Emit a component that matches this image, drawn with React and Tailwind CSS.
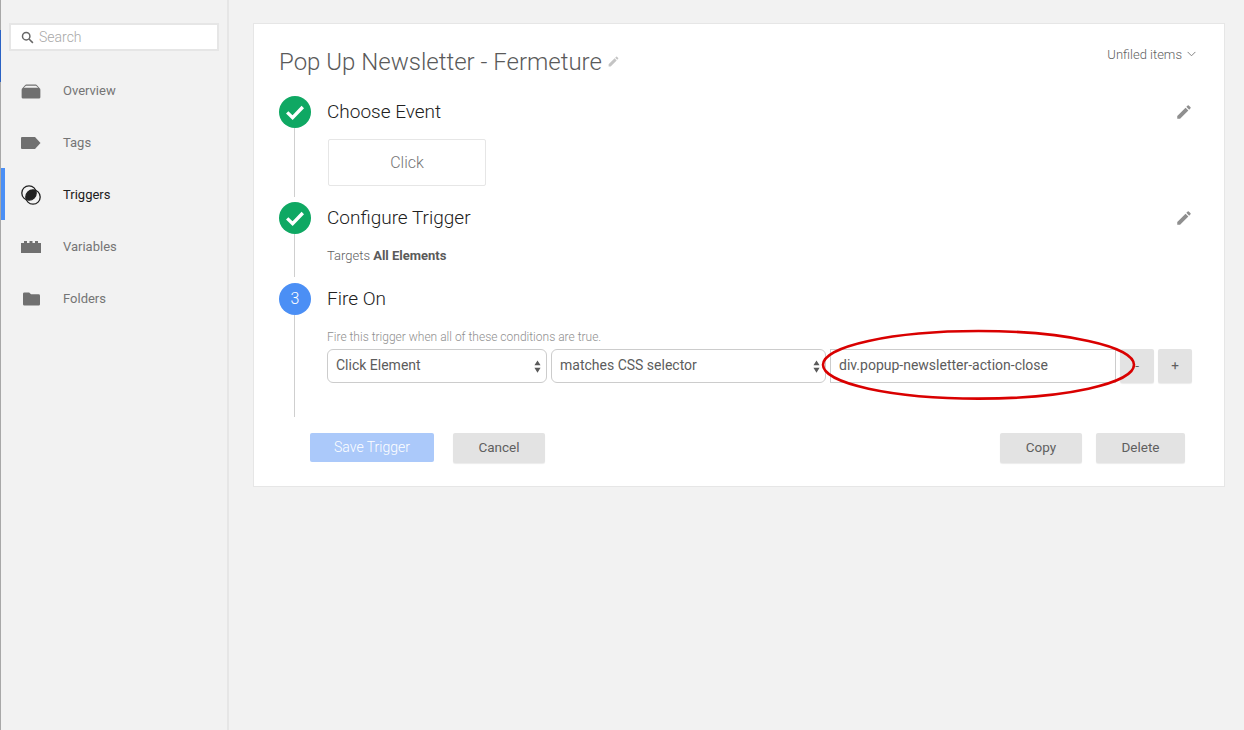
const Pencil = ({ className }) => (
  <svg viewBox="0 0 24 24" className={className} fill="currentColor">
    <path d="M3 17.25V21h3.75L17.81 9.94l-3.75-3.75L3 17.25zM20.71 7.04a1 1 0 0 0 0-1.41l-2.34-2.34a1 1 0 0 0-1.41 0l-1.83 1.83 3.75 3.75 1.83-1.83z" />
  </svg>
);

const Check = () => (
  <svg viewBox="0 0 32 32" className="w-8 h-8" fill="none" stroke="white" strokeWidth="3.4">
    <path d="M8.2 16.4 L13.6 21.6 L23.8 11" />
  </svg>
);

const Updown = () => (
  <svg viewBox="0 0 8 14" className="w-[7px] h-[13px]" fill="#5a5a5a">
    <path d="M4 0 L7.5 5.6 H0.5 Z M4 14 L0.5 8.4 H7.5 Z" />
  </svg>
);

const icons = {
  Overview: (
    <svg viewBox="0 0 20 16" className="w-5 h-[15px]" fill="#707070">
      <path d="M0 6 Q0 5 1 4.2 L3.6 1.2 Q4.2 .5 5 .5 H15 Q15.8 .5 16.4 1.2 L19 4.2 Q20 5 20 6 V14 Q20 15.5 18.5 15.5 H1.5 Q0 15.5 0 14 Z M2.2 4 H17.8 L15.4 1.8 H4.6 Z" fillRule="evenodd" />
    </svg>
  ),
  Tags: (
    <svg viewBox="0 0 20 12" className="w-5 h-3" fill="#707070">
      <path d="M1 0 H14 L19.5 6 L14 12 H1 Q0 12 0 11 V1 Q0 0 1 0 Z" />
    </svg>
  ),
  Triggers: (
    <svg viewBox="0 0 20 20" className="w-5 h-5" fill="none">
      <defs>
        <clipPath id="trigger-lens">
          <circle cx="8" cy="8" r="7.2" />
        </clipPath>
      </defs>
      <circle cx="8" cy="8" r="7.2" stroke="#222" strokeWidth="1.3" />
      <circle cx="12" cy="12" r="7.2" stroke="#222" strokeWidth="1.3" />
      <circle cx="12" cy="12" r="7.2" fill="#222" clipPath="url(#trigger-lens)" />
    </svg>
  ),
  Variables: (
    <svg viewBox="0 0 20 12" className="w-5 h-3" fill="#707070">
      <path d="M0 2 H3 V0 H6 V2 H8.5 V0 H11.5 V2 H14 V0 H17 V2 H20 V12 H0 Z" />
    </svg>
  ),
  Folders: (
    <svg viewBox="0 0 18 14" className="w-[17px] h-[14px]" fill="#707070">
      <path d="M1.5 0 H6.5 L8.5 2 H16.5 Q18 2 18 3.5 V12.5 Q18 14 16.5 14 H1.5 Q0 14 0 12.5 V1.5 Q0 0 1.5 0 Z" />
    </svg>
  ),
};

const NavItem = ({ label, active }) => (
  <div className="relative h-[52px] flex items-center pl-5 pt-[2px]">
    {active && <div className="absolute left-0 top-0 w-1 h-full bg-[#4b8ff5]" />}
    <div className="w-5 flex justify-center">{icons[label]}</div>
    <span className={`ml-[22px] text-[13px] ${active ? "text-[#212121]" : "text-[#757575]"}`}>{label}</span>
  </div>
);

const Select = ({ label, className }) => (
  <div className={`h-[34px] bg-white border border-[#cccccc] rounded-[6px] flex items-center justify-between pl-2 pr-[5px] text-[14px] text-[#5c5c5c] ${className}`}>
    <span className="-mt-[2px]">{label}</span>
    <Updown />
  </div>
);

const Button = ({ children, className }) => (
  <div className={`h-[30px] flex items-center justify-center rounded-[2px] bg-[#e3e3e3] shadow-[0_1px_1px_rgba(0,0,0,0.08)] text-[13.5px] text-[#5f5f5f] pb-px ${className}`}>
    {children}
  </div>
);

const Rail = ({ children, lineClass }) => (
  <div className="w-8 shrink-0 flex flex-col items-center">
    {children}
    <div className={`w-px flex-1 bg-[#cfcfcf] mr-px ${lineClass}`} />
  </div>
);

const Done = () => (
  <div className="w-8 h-8 rounded-full bg-[#0fa863] shrink-0">
    <Check />
  </div>
);

export default function App() {
  return (
    <div className="relative flex w-[1244px] h-[730px] overflow-hidden bg-[#f2f2f2] font-['Roboto',sans-serif]">
      <aside className="w-[229px] h-full shrink-0 border-l border-l-[#a8a8a8] border-r-2 border-r-[#e6e6e6] relative">
        <div className="absolute -left-px top-[30px] w-px h-[52px] bg-[#2a62c4]" />
        <div className="ml-2 mt-[23px] h-[28px] w-[210px] bg-white border-2 border-[#e6e6e6] flex items-center pl-[10px]">
          <svg viewBox="0 0 14 14" className="w-[13px] h-[13px]" fill="none" stroke="#666" strokeWidth="1.6">
            <circle cx="5.6" cy="5.6" r="4" />
            <path d="M8.6 8.6 L12.8 12.8" />
          </svg>
          <span className="ml-[5px] text-[14px] font-light text-[#a8a8a8]">Search</span>
        </div>
        <nav className="mt-[13px]">
          <NavItem label="Overview" />
          <NavItem label="Tags" />
          <NavItem label="Triggers" active />
          <NavItem label="Variables" />
          <NavItem label="Folders" />
        </nav>
      </aside>

      <main className="flex-1 pl-6 pr-[19px] pt-[23px]">
        <section className="h-[464px] bg-white border border-[#e6e6e6] pl-[25px] pr-[32px] pt-[22px]">
          <header className="flex justify-between h-[50px]">
            <div className="flex items-center h-[32px]">
              <h1 className="text-[24px] font-light text-[#5a5a5a] leading-8">Pop Up Newsletter - Fermeture</h1>
              <Pencil className="w-[13px] h-[13px] ml-[5px] -mt-px text-[#c4c4c4]" />
            </div>
            <div className="flex items-center h-[18px] text-[13px] text-[#616161] -mr-1">
              <span className="font-light">Unfiled items</span>
              <svg viewBox="0 0 10 6" className="w-[9px] h-[6px] ml-[5px] -mt-[2px]" fill="none" stroke="#757575" strokeWidth="1">
                <path d="M0.7 0.7 L5 5 L9.3 0.7" />
              </svg>
            </div>
          </header>

          <div className="flex h-[106px]">
            <Rail lineClass="mb-[5px]"><Done /></Rail>
            <div className="ml-4 flex-1">
              <div className="flex items-center justify-between h-8">
                <span className="text-[19px] font-light text-[#212121]">Choose Event</span>
                <Pencil className="w-[18px] h-[18px] text-[#8f8f8f] -mr-px" />
              </div>
              <div className="mt-[11px] ml-px w-[158px] h-[47px] border border-[#e6e6e6] rounded-[2px] flex items-center justify-center text-[16px] font-light text-[#757575]">
                Click
              </div>
            </div>
          </div>

          <div className="flex h-[81px]">
            <Rail lineClass="mb-[6px]"><Done /></Rail>
            <div className="ml-4 flex-1">
              <div className="flex items-center justify-between h-8">
                <span className="text-[19px] font-light text-[#212121]">Configure Trigger</span>
                <Pencil className="w-[18px] h-[18px] text-[#8f8f8f] -mr-px" />
              </div>
              <p className="mt-[14px] text-[13px] leading-4 font-light text-[#616161]">
                Targets <span className="font-bold text-[#5a5a5a]">All Elements</span>
              </p>
            </div>
          </div>

          <div className="flex h-[134px]">
            <Rail>
              <div className="w-8 h-8 rounded-full bg-[#4b8ff5] shrink-0 flex items-center justify-center text-[16px] font-light text-white">3</div>
            </Rail>
            <div className="ml-4 flex-1">
              <div className="flex items-center h-8">
                <span className="text-[19px] font-light text-[#212121]">Fire On</span>
              </div>
              <p className="mt-[14px] text-[12px] leading-4 font-light text-[#8f8f8f]">Fire this trigger when all of these conditions are true.</p>
              <div className="mt-1 flex gap-1">
                <Select label="Click Element" className="w-[220px]" />
                <Select label="matches CSS selector" className="w-[275px]" />
                <div className="w-[286px] h-[34px] bg-white border border-[#cccccc] flex items-center pl-2 pb-[2px] text-[14px] text-[#5c5c5c]">
                  div.popup-newsletter-action-close
                </div>
                <Button className="!h-[34px] w-[34px]">-</Button>
                <Button className="!h-[34px] w-[34px]">+</Button>
              </div>
            </div>
          </div>

          <footer className="mt-4 flex pl-[31px] pr-[7px] items-start">
            <div className="h-[29px] w-[124px] rounded-[2px] bg-[#abc9fa] flex items-center justify-center text-[14px] font-light text-white">Save Trigger</div>
            <Button className="ml-[19px] w-[92px]">Cancel</Button>
            <Button className="ml-auto w-[82px]">Copy</Button>
            <Button className="ml-[14px] w-[89px]">Delete</Button>
          </footer>
        </section>
      </main>

      <svg className="absolute left-[820px] top-[328px] w-[318px] h-[73px] pointer-events-none" viewBox="0 0 318 73" fill="none">
        <ellipse cx="158.5" cy="36.8" rx="155.5" ry="33.8" stroke="#d90000" strokeWidth="2.6" />
      </svg>
    </div>
  );
}
